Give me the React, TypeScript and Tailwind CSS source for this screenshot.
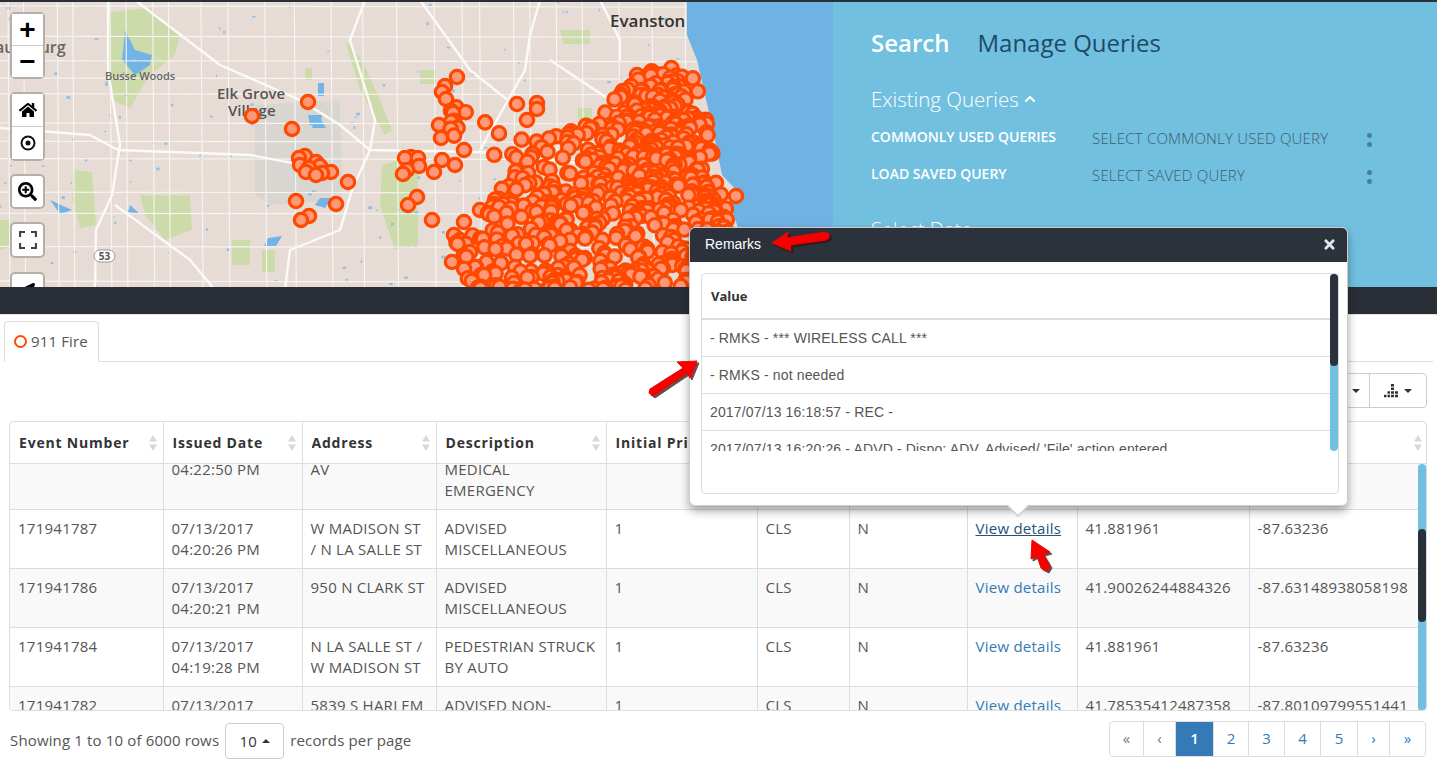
import React from 'react';
import { FaHome, FaSearchPlus, FaLocationArrow, FaChevronUp, FaTimes } from 'react-icons/fa';

const rng = (seed: number) => () => {
    seed = (seed + 0x6d2b79f5) | 0;
    let t = Math.imul(seed ^ (seed >>> 15), 1 | seed);
    t = (t + Math.imul(t ^ (t >>> 7), 61 | t)) ^ t;
    return ((t ^ (t >>> 14)) >>> 0) / 4294967296;
};

const DENSE: number[][] = [[680, 65], [696, 80], [706, 115], [712, 150], [722, 190], [733, 240], [735, 290], [448, 290], [443, 262], [452, 235], [470, 215], [492, 205], [505, 172], [480, 152], [437, 130], [445, 95], [480, 115], [520, 130], [560, 132], [600, 118], [620, 92], [636, 72]];

const inside = (x: number, y: number, poly: number[][]) => {
    let c = false;
    for (let i = 0, j = poly.length - 1; i < poly.length; j = i++) {
        const [xi, yi] = poly[i];
        const [xj, yj] = poly[j];
        if (yi > y !== yj > y && x < ((xj - xi) * (y - yi)) / (yj - yi) + xi) c = !c;
    }
    return c;
};

const OUTLIERS: number[][] = [[252, 116], [308, 102], [292, 129], [296, 201], [336, 204], [309, 216], [301, 220], [348, 182], [331, 172], [322, 173], [316, 175], [306, 172], [300, 165], [299, 158], [305, 156], [316, 162], [320, 166], [309, 168], [457, 77], [445, 86], [442, 92], [446, 99], [453, 113], [439, 125], [441, 138], [408, 205], [417, 197], [432, 220], [405, 158], [411, 157], [418, 158], [403, 174], [407, 170], [419, 166], [434, 172], [442, 160], [455, 165], [464, 150], [517, 104], [537, 103], [537, 109], [527, 120], [736, 196], [637, 75], [621, 97], [464, 222], [480, 210], [454, 235], [460, 240], [470, 252], [452, 262]];

const markers = (() => {
    const r = rng(911);
    const out: number[][] = [...OUTLIERS];
    let n = 0;
    while (n < 640) {
        const x = 440 + r() * 300;
        const y = 62 + r() * 228;
        if (!inside(x, y, DENSE)) continue;
        // the crowd is thinner away from the lake
        if (x < 510 && r() < 0.45) continue;
        if (x < 540 && y < 200 && r() < 0.3) continue;
        out.push([x, y]);
        n++;
    }
    n = 0;
    while (n < 80) {
        const x = 630 + r() * 90;
        const y = 62 + r() * 170;
        if (!inside(x, y, DENSE)) continue;
        out.push([x, y]);
        n++;
    }
    return out.sort((a, b) => a[1] - b[1]);
})();

const streets = (() => {
    const r = rng(53);
    const v: number[] = [];
    const h: number[] = [];
    for (let x = 8; x < 700; x += 14 + r() * 24) v.push(x);
    for (let y = 6; y < 290; y += 14 + r() * 24) h.push(y);
    return { v, h };
})();

const dots = (() => {
    const r = rng(7);
    return Array.from({ length: 130 }, () => [r() * 680, r() * 287, 1 + r() * 3, 1 + r() * 2]);
})();

const GREENS = ['110,12 150,8 180,35 175,55 150,75 130,108 112,100 108,50', '74,170 92,172 96,225 80,228 72,200', '140,195 190,195 192,230 165,240 145,215', '232,240 250,240 250,265 232,265', '262,250 275,250 275,272 262,272', '382,165 418,155 418,245 395,250 380,205', '345,40 362,60 380,100 392,130 385,135 360,90', '560,30 590,30 590,44 564,44', '578,108 592,108 592,120 578,120', '420,70 436,70 436,84 420,84', '305,68 312,68 312,80 305,80', '0,220 10,220 14,245 0,250'];
const WATERS = ['125,30 135,50 152,55 150,65 135,75 122,60', '308,115 322,115 320,128 310,125', '318,115 326,128 312,128', '320,198 332,198 325,208 315,205', '50,200 72,210 60,214', '130,205 140,214 128,212', '268,238 282,236 276,246 264,246', '318,83 324,83 324,96 318,96'];

const MapCanvas = () => (
    <svg viewBox="0 2 833 285" className="block w-[833px] h-[285px]">
        <rect x="0" y="2" width="833" height="285" fill="#e7dcd5" />
        <g className="blur-[0.6px]">
            {GREENS.map((p) => <polygon key={p} points={p} fill="#cddbaa" />)}
            <polygon points="255,105 340,100 342,200 270,205 255,195" fill="#d9d6d2" />
            {WATERS.map((p) => <polygon key={p} points={p} fill="#72b4e6" />)}
            {dots.map((d, i) => <rect key={i} x={d[0]} y={d[1]} width={d[2]} height={d[3]} fill="#8fc0e6" />)}
            <g stroke="#f7f5f2" strokeWidth="1.1" fill="none">
                {streets.v.map((x) => <line key={x} x1={x} y1="0" x2={x + 2} y2="290" />)}
                {streets.h.map((y) => <line key={y} x1="0" y1={y} x2="700" y2={y + 1} />)}
            </g>
            <g stroke="#fbfaf8" strokeWidth="2.4" fill="none" strokeLinejoin="round">
                <polyline points="108,0 108,70 120,145 112,195 96,230 95,290" />
                <polyline points="135,0 220,65 300,100 340,125 370,150 480,152 640,170" />
                <polyline points="0,128 90,135 118,150 250,155 330,170" />
                <polyline points="115,205 190,260 215,290" />
                <polyline points="365,0 350,40 375,120 370,150 352,190 340,230 290,250 285,290" />
                <polyline points="540,0 530,35 525,70 480,150" />
                <polyline points="550,60 610,100 660,170" />
                <polyline points="600,0 620,40 620,60" />
                <polyline points="420,0 470,70 520,110" />
            </g>
        </g>
        <polygon points="687,0 833,0 833,290 738,290 746,250 730,205 741,195 722,175 713,130 697,60 687,35" fill="#6fb2e4" />
        <text x="217" y="99" fontSize="15" fontWeight="600" fill="#555" className="font-['Open_Sans']">Elk Grove</text>
        <text x="228" y="116" fontSize="15" fontWeight="600" fill="#555" className="font-['Open_Sans']">Village</text>
        <text x="105" y="80" fontSize="11" fontWeight="600" fill="#666" className="font-['Open_Sans']">Busse Woods</text>
        <text x="-5" y="53" fontSize="16" fontWeight="600" fill="#666" className="font-['Open_Sans']">aumburg</text>
        <text x="610" y="27" fontSize="17" fontWeight="600" fill="#333" className="font-['Open_Sans']">Evanston</text>
        <rect x="94" y="250" width="21" height="12" rx="6" fill="#fff" stroke="#999" />
        <text x="104.500" y="260" fontSize="10" fontWeight="700" textAnchor="middle" fill="#555" className="font-['Open_Sans']">53</text>
        {markers.map((m, i) => (
            <circle key={i} cx={m[0]} cy={m[1]} r="6.700" fill="#ff9878" stroke="#ff4800" strokeWidth="3.200" />
        ))}
    </svg>
);

const mapBtn = 'flex items-center justify-center w-[31px] bg-white text-black';

const MapControls = () => (
    <div className="absolute left-[10px] top-[10px] flex flex-col gap-[13px]">
        <div className="w-[35px] rounded-[5px] border-2 border-[#b5aea9] bg-white">
            <div className={`${mapBtn} h-[32px] border-b border-[#ccc] text-[28px] font-bold font-['Liberation_Sans'] leading-none`}>+</div>
            <div className={`${mapBtn} h-[31px] text-[28px] font-bold font-['Liberation_Sans'] leading-none`}>−</div>
        </div>
        <div className="w-[35px] rounded-[5px] border-2 border-[#b5aea9] bg-white">
            <div className={`${mapBtn} h-[33px] border-b border-[#ccc]`}><FaHome size={18} /></div>
            <div className={`${mapBtn} h-[32px]`}>
                <svg viewBox="0 0 16 16" className="w-[16px] h-[16px]">
                    <circle cx="8" cy="8" r="6.500" fill="none" stroke="#111" strokeWidth="2" />
                    <circle cx="8" cy="8" r="2.500" fill="#111" />
                </svg>
            </div>
        </div>
        <div className={`${mapBtn} box-content h-[31px] rounded-[5px] border-2 border-[#b5aea9]`}><FaSearchPlus size={19} /></div>
        <div className={`${mapBtn} box-content h-[32px] rounded-[5px] border-2 border-[#b5aea9]`}>
            <svg viewBox="0 0 18 18" className="w-[18px] h-[18px]" fill="none" stroke="#444" strokeWidth="2.200">
                <path d="M1 6V1h5M12 1h5v5M17 12v5h-5M6 17H1v-5" />
            </svg>
        </div>
        <div className={`${mapBtn} box-content h-[32px] mt-[1px] rounded-[5px] border-2 border-[#b5aea9]`}><FaLocationArrow size={15} /></div>
    </div>
);

const QueryRow = ({ label, value }: { label: string; value: string }) => (
    <div className="grid grid-cols-[221px_275px_1fr] h-[37px]">
        <div className="text-[14px] font-semibold text-white leading-[26px]">{label}</div>
        <div className="text-[15px] font-light tracking-[0.2px] text-[#3c5c6e] leading-[29px]">{value}</div>
        <div className="flex flex-col gap-[4px] pt-[9px] items-start w-[6px]">
            <span className="block w-[5px] h-[5px] rounded-full bg-[#4a7ea0]" />
            <span className="block w-[5px] h-[5px] rounded-full bg-[#4a7ea0]" />
        </div>
    </div>
);

const SearchPanel = () => (
    <div className="flex-1 h-[285px] bg-[#72c0e0] pl-[38px] overflow-hidden font-['Open_Sans']">
        <div className="flex gap-[28px] pt-[23px] text-[24px] leading-[36px]">
            <span className="font-semibold text-white">Search</span>
            <span className="text-[#1d4a68]">Manage Queries</span>
        </div>
        <div className="mt-[23px] flex items-center gap-[5px] text-[20.500px] font-light leading-[30px] text-white">
            Existing Queries <FaChevronUp size={12} />
        </div>
        <div className="mt-[10px]">
            <QueryRow label="COMMONLY USED QUERIES" value="SELECT COMMONLY USED QUERY" />
            <QueryRow label="LOAD SAVED QUERY" value="SELECT SAVED QUERY" />
        </div>
        <div className="mt-[17px] text-[20px] font-light leading-[30px] text-white">Select Date</div>
    </div>
);

const COLS = [153, 139, 134, 170, 151, 92, 118, 110, 172, 179];
const Cols = () => (
    <colgroup>
        {COLS.map((w, i) => <col key={i} style={{ width: w }} />)}
    </colgroup>
);

const HEADERS = ['Event Number', 'Issued Date', 'Address', 'Description', 'Initial Priority', 'Status', 'Alarm', 'Remarks', 'Latitude', 'Longitude'];

const SortIcon = () => (
    <svg viewBox="0 0 10 16" className="w-[10px] h-[16px] shrink-0">
        <path d="M5 0l4 6.500H1zM5 16l-4-6.500h8z" fill="#d8d8d8" />
    </svg>
);

type Row = { id: string; date: string[]; addr: string[]; desc: string[]; lat: string; lng: string };
const ROWS: Row[] = [
    { id: '171941790', date: ['07/13/2017', '04:22:50 PM'], addr: ['4700 N ASHLAND', 'AV'], desc: ['EMS PLAN 1', 'MEDICAL', 'EMERGENCY'], lat: '41.96743', lng: '-87.66892' },
    { id: '171941787', date: ['07/13/2017', '04:20:26 PM'], addr: ['W MADISON ST', '/ N LA SALLE ST'], desc: ['ADVISED', 'MISCELLANEOUS'], lat: '41.881961', lng: '-87.63236' },
    { id: '171941786', date: ['07/13/2017', '04:20:21 PM'], addr: ['950 N CLARK ST'], desc: ['ADVISED', 'MISCELLANEOUS'], lat: '41.90026244884326', lng: '-87.63148938058198' },
    { id: '171941784', date: ['07/13/2017', '04:19:28 PM'], addr: ['N LA SALLE ST /', 'W MADISON ST'], desc: ['PEDESTRIAN STRUCK', 'BY AUTO'], lat: '41.881961', lng: '-87.63236' },
    { id: '171941782', date: ['07/13/2017', '04:18:40 PM'], addr: ['5839 S HARLEM', 'AV'], desc: ['ADVISED NON-', 'EMERGENCY'], lat: '41.78535412487358', lng: '-87.80109799551441' },
];

const Lines = ({ v }: { v: string[] }) => <>{v.map((l) => <div key={l}>{l}</div>)}</>;

const td = 'align-top border-r border-b border-[#ddd] px-[8px] pt-[8px] pb-[8px] whitespace-nowrap overflow-hidden';

const EventTable = () => (
    <div className="w-[1418px] ml-[5px] rounded-[4px] border border-[#ddd] overflow-hidden">
        <table className="table-fixed w-[1418px] border-collapse">
            <Cols />
            <thead>
                <tr className="h-[41px]">
                    {HEADERS.map((h) => (
                        <th key={h} className="border-r border-[#ddd] pl-[9px] pr-[5px] text-left text-[14px] font-bold tracking-[0.8px] text-[#333]">
                            <div className="flex items-center justify-between overflow-hidden whitespace-nowrap">{h}<SortIcon /></div>
                        </th>
                    ))}
                </tr>
            </thead>
        </table>
        <div className="relative h-[247px] overflow-hidden border-t border-[#ddd]">
            <table className="-mt-[34px] table-fixed w-[1418px] border-collapse text-[15px] tracking-[0.25px] leading-[21px] text-[#555]">
                <Cols />
                <tbody>
                    {ROWS.map((r, i) => (
                        <tr key={r.id} className={i % 2 === 0 ? 'bg-[#f9f9f9]' : 'bg-white'}>
                            <td className={td}>{r.id}</td>
                            <td className={td}><Lines v={r.date} /></td>
                            <td className={td}><Lines v={r.addr} /></td>
                            <td className={td}><Lines v={r.desc} /></td>
                            <td className={td}>1</td>
                            <td className={td}>CLS</td>
                            <td className={td}>N</td>
                            <td className={td}>
                                <a className={i === 1 ? 'text-[#23527c] underline' : 'text-[#337ab7]'}>View details</a>
                            </td>
                            <td className={td}>{r.lat}</td>
                            <td className={td}>{r.lng}</td>
                        </tr>
                    ))}
                </tbody>
            </table>
            <div className="absolute right-[0px] top-[0px] h-[247px] w-[8px] rounded-[4px] bg-[#72c0e0]">
                <div className="absolute top-[65px] h-[93px] w-[8px] rounded-[4px] bg-[#2a303a]" />
            </div>
        </div>
    </div>
);

const PAGES = [
    { t: '«', w: 'w-[34px]', c: 'text-[#777]' },
    { t: '‹', w: 'w-[32px]', c: 'text-[#777]' },
    { t: '1', w: 'w-[38px]', c: 'bg-[#337ab7] text-white font-semibold' },
    { t: '2', w: 'w-[35px]', c: 'text-[#337ab7]' },
    { t: '3', w: 'w-[36px]', c: 'text-[#337ab7]' },
    { t: '4', w: 'w-[36px]', c: 'text-[#337ab7]' },
    { t: '5', w: 'w-[37px]', c: 'text-[#337ab7]' },
    { t: '›', w: 'w-[32px]', c: 'text-[#337ab7]' },
    { t: '»', w: 'w-[35px]', c: 'text-[#337ab7]' },
];

const Footer = () => (
    <div className="flex justify-between pl-[6px] pr-[7px] pt-[10px]">
        <div className="flex items-center gap-[5px] h-[36px] mt-[2px] text-[15px] tracking-[0.15px] text-[#555]">
            <span className="pb-[2px]">Showing 1 to 10 of 6000 rows</span>
            <span className="flex items-center justify-center gap-[5px] w-[59px] h-[36px] mx-[1px] rounded-[4px] border border-[#ccc] text-[#333]">
                10
                <span className="w-0 h-0 border-x-[4px] border-x-transparent border-b-[4px] border-b-[#333]" />
            </span>
            <span className="pb-[2px]">records per page</span>
        </div>
        <div className="flex h-[36px] rounded-[4px] border border-[#ddd] overflow-hidden text-[15px]">
            {PAGES.map((p) => (
                <div key={p.t} className={`flex items-center justify-center pb-[2px] border-r border-[#ddd] last:border-r-0 ${p.w} ${p.c}`}>{p.t}</div>
            ))}
        </div>
    </div>
);

const Toolbar = () => (
    <div className="flex justify-end pr-[6px] pt-[11px] h-[46px]">
        <div className="flex h-[35px] rounded-[4px] border border-[#ccc] text-[#333]">
            <div className="flex items-center justify-center gap-[6px] w-[60px] border-r border-[#ccc] pl-[32px]">
                <span className="w-0 h-0 border-x-[4px] border-x-transparent border-t-[4px] border-t-[#333]" />
            </div>
            <div className="flex items-center justify-center gap-[6px] w-[56px]">
                <svg viewBox="0 0 14 14" className="w-[14px] h-[14px]" fill="#333">
                    <path d="M7 0h3v2.500H7zM7 3.600h3v2.500H7zM7 7.200h3v2.500H7zM11 7.200h3v2.500h-3zM3.500 7.200h2.500v2.500H3.500zM0 10.800h2.500v2.500H0zM3.500 10.800h2.500v2.500H3.500zM7 10.800h3v2.500H7zM11 10.800h3v2.500h-3z" />
                </svg>
                <span className="w-0 h-0 border-x-[4px] border-x-transparent border-t-[4px] border-t-[#333]" />
            </div>
        </div>
    </div>
);

const REMARKS = ['- RMKS - *** WIRELESS CALL ***', '- RMKS - not needed', '2017/07/13 16:18:57 - REC -', "2017/07/13 16:20:26 - ADVD - Dispo: ADV, Advised/ 'File' action entered"];

const Popover = () => (
    <div className="absolute left-[689px] top-[227px] w-[659px] h-[279px] rounded-[6px] border border-[#ccc] bg-white shadow-[0_5px_10px_rgba(0,0,0,0.35)] font-['Liberation_Sans']">
        <div className="flex items-center justify-between h-[34px] rounded-t-[5px] bg-[#2c323c] pl-[15px] pr-[10px] pb-[2px] text-[14px] text-white">
            <span>Remarks</span>
            <FaTimes size={15} className="text-[#e6e6e6]" />
        </div>
        <div className="relative ml-[11px] mr-[8px] mt-[11px] h-[221px] rounded-[4px] border border-[#ddd]">
            <div className="h-[177px] overflow-hidden">
                <div className="flex items-center h-[46px] border-b-2 border-[#ddd] pl-[9px] pt-[2px] mr-[8px] text-[13px] font-bold text-[#333] font-['Open_Sans']">Value</div>
                {REMARKS.map((r) => (
                    <div key={r} className="h-[37px] border-b border-[#ddd] mr-[8px] pl-[8px] text-[14px] tracking-[0.15px] leading-[36px] text-[#555] whitespace-nowrap">{r}</div>
                ))}
            </div>
            <div className="absolute right-[0px] top-[0px] h-[177px] w-[8px] rounded-[4px] bg-[#72c0e0]">
                <div className="h-[92px] w-[8px] rounded-[4px] bg-[#2c323c]" />
            </div>
        </div>
        <div className="absolute left-[316px] -bottom-[12px] w-0 h-0 border-x-[12px] border-x-transparent border-t-[12px] border-t-[#ccc]" />
        <div className="absolute left-[317px] -bottom-[10px] w-0 h-0 border-x-[11px] border-x-transparent border-t-[11px] border-t-white" />
    </div>
);

const ARROWS = [
    '772,243 788,232 787,238 825,232 829,234 829,238 826,240 790,245 791,251',
    '697,361 677,362 683,368 650,389 649,393 653,396 687,373 690,378',
    '1032,540 1050,552 1043,554 1050,566 1047,571 1041,568 1037,556 1031,559',
];

const Arrows = () => (
    <svg viewBox="0 0 1437 768" className="absolute left-[0px] top-[0px] w-[1437px] h-[768px] pointer-events-none">
        {ARROWS.map((p) => (
            <g key={p} strokeLinejoin="round">
                <polygon points={p} transform="translate(2 2)" fill="#3a1010" stroke="#3a1010" opacity="0.75" />
                <polygon points={p} fill="#f60000" stroke="#f60000" strokeWidth="1" />
            </g>
        ))}
    </svg>
);

export default function App() {
    return (
        <div className="relative w-[1437px] h-[768px] overflow-hidden bg-white font-['Open_Sans',sans-serif]">
            <div className="h-[2px] bg-[#2a2e37]" />
            <div className="flex h-[285px]">
                <div className="relative w-[833px] h-[285px] overflow-hidden">
                    <MapCanvas />
                    <MapControls />
                </div>
                <SearchPanel />
            </div>
            <div className="h-[28px] bg-[#2a2e37] border-b border-[#e5e5e5]" />
            <div className="pl-[4px] pr-[4px] pt-[6px]">
                <div className="flex border-b border-[#ddd] h-[41px]">
                    <div className="flex items-center gap-[4px] h-[41px] rounded-t-[4px] border border-b-0 border-[#ddd] bg-white pl-[9px] pr-[10px] pb-[2px] text-[15px] tracking-[0.15px] text-[#555]">
                        <span className="w-[13px] h-[13px] rounded-full border-2 border-[#ff4800]" />
                        911 Fire
                    </div>
                </div>
                <Toolbar />
                <div className="mt-[13px]">
                    <EventTable />
                </div>
                <Footer />
            </div>
            <Popover />
            <Arrows />
        </div>
    );
}
